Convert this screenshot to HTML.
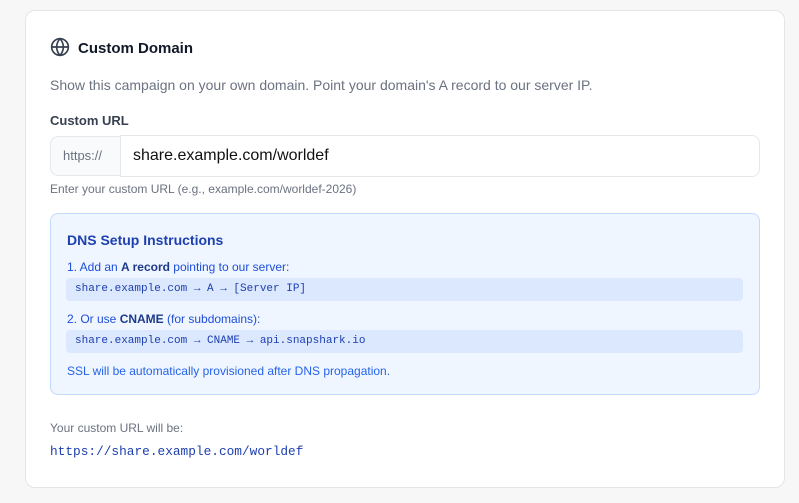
<!DOCTYPE html>
<html><head><style>
*{box-sizing:border-box;margin:0;padding:0}
body{width:799px;height:503px;background:#f7f7f7;font-family:"Liberation Sans",sans-serif;position:relative;overflow:hidden}
.card{position:absolute;left:25px;top:10px;width:760px;height:478px;background:#fff;border:1px solid #e5e5e5;border-radius:10px}
.abs{position:absolute;white-space:nowrap}
.code{position:absolute;left:66px;width:677px;height:23px;background:#dbe8fe;border-radius:4px;font-family:"Liberation Mono",monospace;font-size:11px;color:#1e40af;padding-left:9px;line-height:23px}
</style></head><body>
<div class="card"></div>
<svg class="abs" style="left:50px;top:37px" width="20" height="20" viewBox="0 0 24 24" fill="none" stroke="#374151" stroke-width="2" stroke-linecap="round"><circle cx="12" cy="12" r="10"/><path d="M2 12h20"/><path d="M12 2a15 15 0 0 1 4 10 15 15 0 0 1-4 10 15 15 0 0 1-4-10 15 15 0 0 1 4-10z"/></svg>
<div class="abs" style="left:78px;top:40px;font-size:15px;font-weight:bold;color:#111827">Custom Domain</div>
<div class="abs" style="left:50px;top:77px;font-size:14px;color:#6b7280">Show this campaign on your own domain. Point your domain's A record to our server IP.</div>
<div class="abs" style="left:50px;top:113px;font-size:13px;font-weight:bold;color:#374151">Custom URL</div>
<div class="abs" style="left:50px;top:136px;width:75px;height:40px;background:#f9fafb;border:1px solid #e5e7eb;border-radius:8px 0 0 8px;font-size:13px;color:#6b7280;line-height:38px;padding-left:12px">https://</div>
<div class="abs" style="left:120px;top:135px;width:640px;height:42px;background:#fff;border:1px solid #e5e7eb;border-radius:0 8px 8px 0;font-size:16px;color:#111;line-height:40px;padding-left:12px">share.example.com/worldef</div>
<div class="abs" style="left:50px;top:182px;font-size:12px;color:#6b7280">Enter your custom URL (e.g., example.com/worldef-2026)</div>
<div class="abs" style="left:50px;top:213px;width:710px;height:182px;background:#eff6ff;border:1px solid #bfdbfe;border-radius:8px"></div>
<div class="abs" style="left:67px;top:232px;font-size:14px;font-weight:bold;color:#1e40af">DNS Setup Instructions</div>
<div class="abs" style="left:67px;top:260px;font-size:12px;color:#1d4ed8">1. Add an <b style="color:#1e3a8a">A record</b> pointing to our server:</div>
<div class="code" style="top:278px">share.example.com → A → [Server IP]</div>
<div class="abs" style="left:67px;top:312px;font-size:12px;color:#1d4ed8">2. Or use <b style="color:#1e3a8a">CNAME</b> (for subdomains):</div>
<div class="code" style="top:330px">share.example.com → CNAME → api.snapshark.io</div>
<div class="abs" style="left:67px;top:364px;font-size:12px;color:#2563eb">SSL will be automatically provisioned after DNS propagation.</div>
<div class="abs" style="left:50px;top:421px;font-size:12px;color:#6b7280">Your custom URL will be:</div>
<div class="abs" style="left:50px;top:444px;font-size:12.8px;font-family:'Liberation Mono',monospace;color:#1e40af">https://share.example.com/worldef</div>
</body></html>
